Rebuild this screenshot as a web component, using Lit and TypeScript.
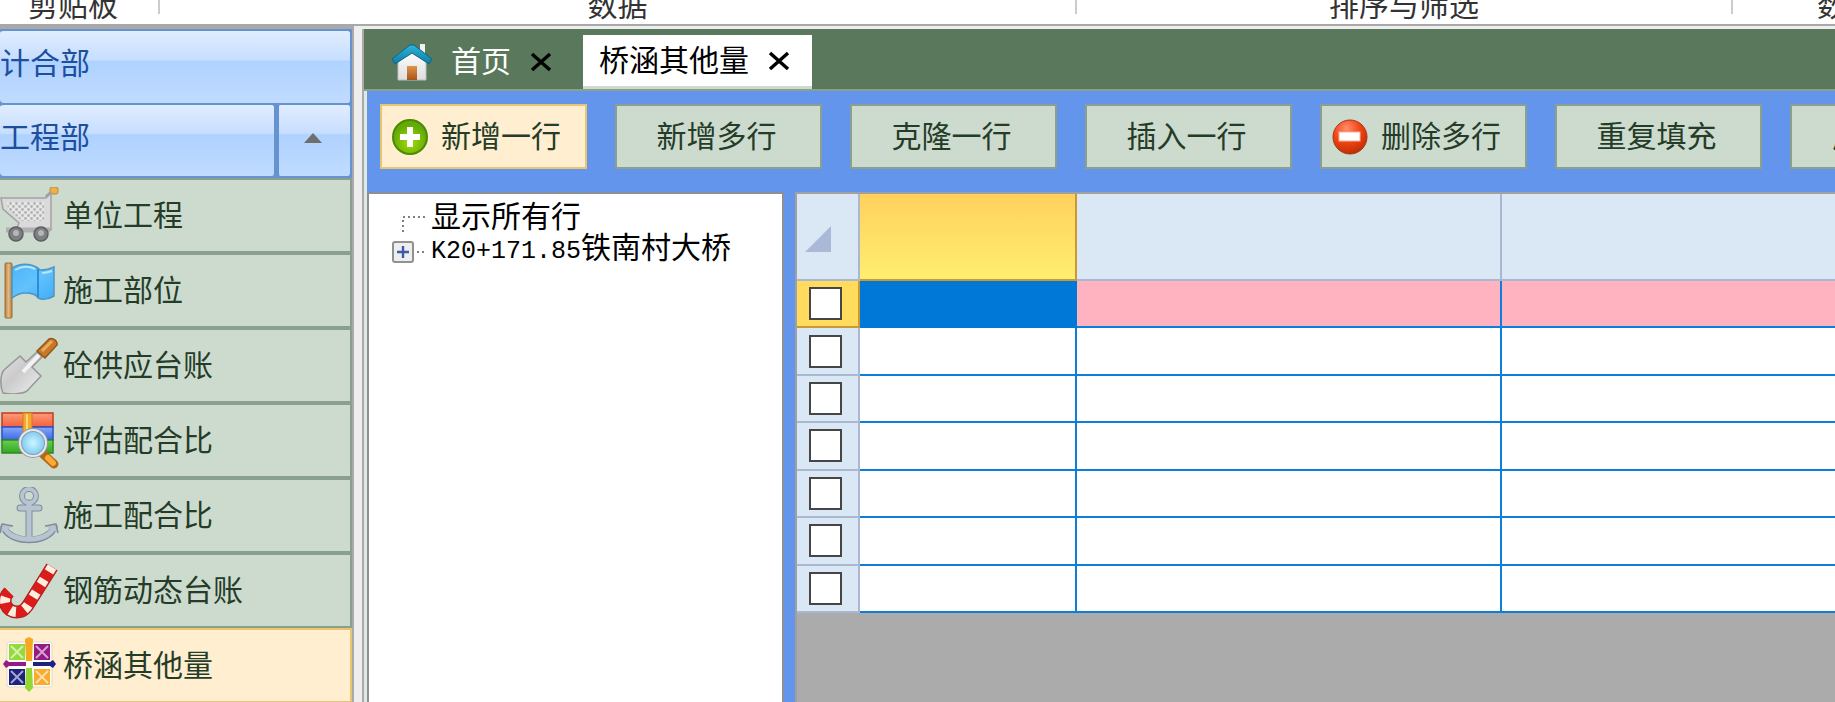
import { LitElement, html, css, svg } from "lit";
import { customElement, state } from "lit/decorators.js";

const cart = svg`
  <path d="M46 10 L53 4" stroke="#9a9a9a" stroke-width="3"/>
  <rect x="50" y="0" width="8" height="7" rx="2" fill="#efb04a" stroke="#b98a3a"/>
  <path d="M1 11 H46 L51 6 L51 43 H16 L19 36 L3 22 Z" fill="#dadada" stroke="#a2a2a2" stroke-width="1.5"/>
  <path d="M7 15 H44 V34 H22 L8 22 Z" fill="url(#mesh)"/>
  <path d="M6 43 H50" stroke="#b0b0b0" stroke-width="5"/>
  <circle cx="16" cy="47" r="7" fill="#7d7f82" stroke="#5c5f62" stroke-width="1.5"/><circle cx="16" cy="46" r="3" fill="#b4b6b8"/>
  <circle cx="41" cy="47" r="7" fill="#7d7f82" stroke="#5c5f62" stroke-width="1.5"/><circle cx="41" cy="46" r="3" fill="#b4b6b8"/>`;

const flag = svg`
  <rect x="5" y="1" width="7" height="55" rx="1" fill="url(#wood)" stroke="#9a6c34"/>
  <path d="M12 6 C20 1 30 1 38 6 L40 8 C45 8 50 7 54 5 L54 34 C49 37 43 38 38 36 C36 32 30 31 25 31 C20 31 16 33 12 36 Z" fill="url(#sky)" stroke="#4f95c2" stroke-width="1.5"/>
  <path d="M38 7 V35" stroke="#2b8ed6" stroke-width="2"/>
  <path d="M15 8 C22 4 29 4 35 7 M42 11 C46 11 49 10 52 9" stroke="#b8e6ff" stroke-width="2" fill="none"/>`;

const trowel = svg`
  <path d="M20 19 L26 25 L37 15 L42 20 L32 30 L41 39 L27 54 C20 58 8 57 3 56 C0 50 0 38 4 33 Z" fill="url(#steel)" stroke="#969696" stroke-width="1.5"/>
  <path d="M23 35 L39 18" stroke="#f3f3f3" stroke-width="4"/>
  <path d="M37 14 L49 2 C53 0 58 4 57 8 L45 21 Z" fill="#c9782a" stroke="#935618" stroke-width="1.5"/>
  <path d="M42 14 L52 4" stroke="#e8ab60" stroke-width="3"/>`;

const archive = svg`
  <rect x="2" y="1" width="51" height="14" fill="url(#tomato)" stroke="#c33a22" stroke-width="1.5"/>
  <rect x="2" y="15" width="51" height="13" fill="url(#azure)" stroke="#2b50c8" stroke-width="1.5"/>
  <rect x="2" y="28" width="51" height="13" fill="url(#leaf)" stroke="#2c8a20" stroke-width="1.5"/>
  <rect x="23" y="1" width="9" height="20" fill="#f5a82c" stroke="#c9821c"/>
  <path d="M27 2 V18" stroke="#ffd37a" stroke-width="2"/>
  <path d="M43 42 L54 52" stroke="#b36a15" stroke-width="9" stroke-linecap="round"/>
  <path d="M48 46 L53 51" stroke="#fba937" stroke-width="6" stroke-linecap="round"/>
  <circle cx="33" cy="31" r="13" fill="url(#lens)" stroke="#8f9aa8" stroke-width="4"/>
  <circle cx="33" cy="31" r="13" fill="none" stroke="#e4e9ee" stroke-width="2"/>`;

const anchor = svg`
  <g fill="none" stroke="#7f8c99" stroke-linecap="round">
    <circle cx="29" cy="9" r="7" stroke-width="6"/><path d="M29 16 V50 M20 21 H39" stroke-width="7"/>
    <path d="M4 40 C9 57 49 57 54 40" stroke-width="7"/></g>
  <path d="M0 46 L2 37 L13 39 M58 46 L56 37 L45 39" fill="#b4c1cf" stroke="#7f8c99" stroke-width="1.5"/>
  <g fill="none" stroke="#b7c4d2" stroke-linecap="round">
    <circle cx="29" cy="9" r="7" stroke-width="4"/><path d="M29 16 V50 M20 21 H39" stroke-width="5"/>
    <path d="M5 41 C10 56 48 56 53 41" stroke-width="5"/></g>`;

const cane = svg`
  <path d="M9 30 C1 38 6 50 17 50 C24 50 27 45 30 40 L52 5" fill="none" stroke="#a82020" stroke-width="13"/>
  <path d="M9 30 C1 38 6 50 17 50 C24 50 27 45 30 40 L52 5" fill="none" stroke="#dc1c1c" stroke-width="11"/>
  <path d="M9 30 C1 38 6 50 17 50 C24 50 27 45 30 40 L52 5" fill="none" stroke="#ffeede" stroke-width="10" stroke-dasharray="6 9" stroke-dashoffset="-6"/>`;

const tiles = svg`
  <rect x="7" y="5" width="45" height="45" rx="2" fill="#fffdf8" stroke="#e2dac8"/>
  <rect x="9" y="7" width="16" height="16" fill="#93da3a"/><rect x="34" y="7" width="16" height="16" fill="#951a86"/>
  <rect x="9" y="32" width="16" height="16" fill="#1c2280"/><rect x="34" y="32" width="16" height="16" fill="#f9ab2c"/>
  <path d="M11 9 L23 21 M23 9 L11 21 M36 9 L48 21 M48 9 L36 21 M11 34 L23 46 M23 34 L11 46 M36 34 L48 46 M48 34 L36 46" stroke="#fff" stroke-width="2" stroke-opacity=".6"/>
  <path d="M25 2 L29 0 L33 2 L32 24 H26 Z" fill="#f5a71e"/><path d="M26 31 H32 L33 51 L29 55 L25 51 Z" fill="#93d733"/>
  <path d="M3 27 L6 23 L9 25 H26 V29 H9 L6 31 Z" fill="#951a86"/><path d="M56 27 L53 23 L50 25 H33 V29 H50 L53 31 Z" fill="#1c2280"/>`;

const home = svg`
  <rect x="28" y="1" width="5" height="12" fill="#f1f1f1"/>
  <path d="M6 19 L20 7 L34 19 V37 H6 Z" fill="url(#wall)" stroke="#bdbdbd"/>
  <path d="M0 16 L18 2 H22 L40 16 L37 21 L20 10 L3 21 Z" fill="url(#roof)" stroke="#0c6688"/>
  <rect x="15" y="23" width="10" height="14" fill="url(#door)"/>`;

const plus = svg`
  <circle cx="18" cy="18" r="17" fill="url(#green)" stroke="#4b8a06" stroke-width="2"/>
  <path d="M18 8 V28 M8 18 H28" stroke="#fff" stroke-width="6"/>`;

const minus = svg`
  <circle cx="18" cy="18" r="17" fill="url(#red)" stroke="#a83416" stroke-width="1"/>
  <rect x="7" y="13" width="21" height="9" fill="#fff" stroke="#f6b09a"/>`;

const defs = svg`<defs>
  <pattern id="mesh" width="6" height="6" patternUnits="userSpaceOnUse"><rect width="6" height="6" fill="#e6e6e6"/><circle cx="1.5" cy="1.5" r="1.4" fill="#b4b4b4"/><circle cx="4.5" cy="4.5" r="1.4" fill="#b4b4b4"/></pattern>
  <linearGradient id="wood"><stop stop-color="#b98142"/><stop offset=".5" stop-color="#e3b983"/><stop offset="1" stop-color="#b98142"/></linearGradient>
  <linearGradient id="sky" x2="1" y2="1"><stop stop-color="#4db4f8"/><stop offset=".5" stop-color="#62c2fd"/><stop offset="1" stop-color="#41adf6"/></linearGradient>
  <linearGradient id="steel" x2="1" y2="1"><stop stop-color="#e4e4e4"/><stop offset=".45" stop-color="#cbcbcb"/><stop offset="1" stop-color="#efefef"/></linearGradient>
  <linearGradient id="tomato" x2="0" y2="1"><stop stop-color="#ff9a78"/><stop offset="1" stop-color="#f4603c"/></linearGradient>
  <linearGradient id="azure" x2="0" y2="1"><stop stop-color="#86a8fa"/><stop offset="1" stop-color="#3c68ea"/></linearGradient>
  <linearGradient id="leaf" x2="0" y2="1"><stop stop-color="#6cd050"/><stop offset="1" stop-color="#34a424"/></linearGradient>
  <radialGradient id="lens"><stop stop-color="#cdf6ff"/><stop offset="1" stop-color="#78c6f0"/></radialGradient>
  <linearGradient id="wall" x2="0" y2="1"><stop stop-color="#fff"/><stop offset="1" stop-color="#dedede"/></linearGradient>
  <linearGradient id="roof" x2="0" y2="1"><stop stop-color="#2cb4dc"/><stop offset="1" stop-color="#0f7da3"/></linearGradient>
  <linearGradient id="door" x2="0" y2="1"><stop stop-color="#e0954a"/><stop offset="1" stop-color="#a85316"/></linearGradient>
  <radialGradient id="green" cy=".65"><stop stop-color="#a4dc08"/><stop offset="1" stop-color="#64ab06"/></radialGradient>
  <radialGradient id="red" cx=".4" cy=".25" r=".8"><stop stop-color="#ff8d6c"/><stop offset=".5" stop-color="#f24412"/><stop offset="1" stop-color="#b82c02"/></radialGradient>
</defs>`;

const icon = (shape: unknown, w: number, h: number) =>
  html`<svg width=${w} height=${h} viewBox="0 0 ${w} ${h}" aria-hidden="true">${defs}${shape}</svg>`;

const MODULES = [
  { name: "单位工程", shape: cart },
  { name: "施工部位", shape: flag },
  { name: "砼供应台账", shape: trowel },
  { name: "评估配合比", shape: archive },
  { name: "施工配合比", shape: anchor },
  { name: "钢筋动态台账", shape: cane },
  { name: "桥涵其他量", shape: tiles },
];

const ACTIONS = [
  { name: "新增一行", shape: plus },
  { name: "新增多行" },
  { name: "克隆一行" },
  { name: "插入一行" },
  { name: "删除多行", shape: minus },
  { name: "重复填充" },
  { name: "反向选择" },
];

@customElement("app-root")
export class AppRoot extends LitElement {
  @state() private module = "桥涵其他量";
  @state() private action = "新增一行";

  static styles = css`
    :host {
      display: flex;
      flex-direction: column;
      height: 100vh;
      overflow: hidden;
      background: #eee;
      font: 30px/34px "Noto Sans CJK SC", sans-serif;
      color: #000;
    }
    * { box-sizing: border-box; }
    svg { display: block; flex: none; }
    button {
      font: inherit;
      color: inherit;
      margin: 0;
      padding: 0;
      border: 0;
      border-radius: 0;
      background: none;
      white-space: nowrap;
    }
    .ribbon {
      flex: none;
      display: grid;
      grid-template-columns: 160px 917fr 656fr 102fr;
      height: 26px;
      background: #fff;
      border-bottom: 2px solid #a9a9a9;
      color: #333;
      overflow: hidden;
    }
    .group {
      display: flex;
      align-items: flex-end;
      justify-content: center;
      height: 20px;
      min-width: 0;
      white-space: nowrap;
      padding-right: 2px;
    }
    .group:first-child { padding-right: 14px; }
    .group:last-child { justify-content: flex-start; padding-left: 84px; }
    .group:not(:last-child) {
      background: linear-gradient(#ccc, #ccc) right top / 2px 14px no-repeat;
    }
    .main { flex: 1; display: flex; min-height: 0; }
    .side {
      flex: none;
      width: 354px;
      border-top: 3px solid #a9a9a9;
      border-right: 2px solid #a9a9a9;
      background: #8b9f8f;
      overflow: hidden;
    }
    .head { display: flex; height: 74px; background: #6593cf; }
    .bar {
      flex: 1;
      text-align: left;
      color: #1d4f9e;
      padding-bottom: 12px;
      border: solid #6593cf;
      border-width: 2px 2px 0 0;
      border-radius: 4px;
      background: linear-gradient(#e1edff, #c6deff 40%, #afd2ff 42%, #c0dbff);
    }
    .head + .head { height: 75px; border-bottom: 2px solid #6593cf; }
    .fold {
      flex: none;
      width: 76px;
      display: flex;
      align-items: center;
      justify-content: center;
      padding: 0 4px 6px 0;
      border-left-width: 3px;
    }
    .item {
      display: flex;
      align-items: center;
      gap: 4px;
      width: 100%;
      height: 75px;
      border: solid #8b9f8f;
      border-width: 2px 2px 2px 0;
      background: #cddbce;
      color: #243c28;
    }
    .item span, .tool span { padding-bottom: 6px; }
    .item.on { border-color: #e9c56f; background: #ffeecf; }
    .work {
      flex: 1;
      min-width: 0;
      display: flex;
      flex-direction: column;
      margin: 3px 0 0 8px;
      border-left: 2px solid #a9a9a9;
    }
    .tabs {
      flex: none;
      display: flex;
      height: 62px;
      background: #5a785b;
      border-bottom: 2px solid #8ba18b;
      padding: 6px 0 0 28px;
    }
    .tab { display: flex; align-items: center; height: 54px; }
    .tab button { padding-bottom: 6px; }
    .tab.first { color: #fff; margin-right: 31px; }
    .tab.first button:first-child { display: flex; align-items: center; gap: 18px; }
    .tab.first svg { margin-top: 6px; }
    .tab.on { background: #fff; border-bottom: 3px solid #cddbce; padding: 0 22px 0 16px; }
    .tab .close { color: #000; width: 22px; margin-left: 19px; padding-bottom: 0; }
    .tab .close svg { margin-top: 0; }
    .page {
      flex: 1;
      min-height: 0;
      display: flex;
      flex-direction: column;
      background: #6495ed;
      border-left: 3px solid #dfe8e2;
    }
    .tools { flex: none; display: flex; gap: 28px; padding: 13px 0 23px 13px; overflow: hidden; }
    .tool {
      flex: none;
      width: 207px;
      height: 65px;
      display: flex;
      align-items: center;
      justify-content: center;
      gap: 13px;
      padding-right: 4px;
      border: 2px solid #8b9f8f;
      background: #cddbce;
      color: #243c28;
    }
    .tool.pic { justify-content: flex-start; padding-left: 10px; }
    .tool.on { border-color: #e9c56f; background: #ffeecf; }
    .panes { flex: 1; min-height: 0; display: flex; gap: 11px; }
    .tree {
      flex: none;
      width: 417px;
      margin: 0;
      padding: 4px 0 0 23px;
      list-style: none;
      background: #fff;
      border: 2px solid #8b8f96;
      border-bottom: 0;
    }
    .tree li { display: flex; align-items: center; height: 34px; white-space: nowrap; }
    .tree span { padding-bottom: 2px; }
    .tree svg { margin-right: 5px; }
    .num { font-family: "Liberation Mono", monospace; font-size: 25px; }
    .sheet {
      flex: 1;
      min-width: 0;
      background: #ababab;
      border: solid #a0a0a0;
      border-width: 2px 0 0 2px;
      overflow: hidden;
    }
    table { width: 100%; height: 419px; border-collapse: separate; border-spacing: 0; table-layout: fixed; }
    th, td { padding: 0; }
    thead tr { height: 87px; }
    th {
      background: #dae7f5;
      border: solid #a9b7d1;
      border-width: 0 2px 2px 0;
    }
    td { background: #fff; border: solid #0a7fdb; border-width: 0 2px 2px 0; }
    td:last-child, th:last-child { border-right: 0; }
    .c0 { width: 63px; }
    .c1 { width: 217px; }
    .c2 { width: 425px; }
    .corner svg { margin: 4px 0 0 8px; }
    .hot { background: linear-gradient(#ffd15c, #ffee70); border-color: #cc9834; }
    .cur th { background: #ffdb5e; border-color: #cc9834; }
    .cur td { background: #ffb3c0; }
    .cur .pick { background: #0078d7; border-color: #0078d7; }
    input {
      appearance: none;
      display: block;
      width: 33px;
      height: 33px;
      margin: 0 0 0 12px;
      border: 2px solid #464646;
      background: #fff;
    }
    input:checked { background: linear-gradient(#464646, #464646) center / 15px 15px no-repeat #fff; }
  `;

  private cross() {
    return html`<svg width="22" height="20" viewBox="0 0 22 20" aria-hidden="true"><path d="M2 2 L20 18 M20 2 L2 18" stroke="#000" stroke-width="3.4"/></svg>`;
  }

  render() {
    return html`
      <header class="ribbon">
        ${["剪贴板", "数据", "排序与筛选", "数据"].map((g) => html`<div class="group">${g}</div>`)}
      </header>
      <div class="main">
        <nav class="side">
          <div class="head"><button class="bar">计合部</button></div>
          <div class="head">
            <button class="bar">工程部</button>
            <button class="bar fold" aria-label="收起">
              <svg width="18" height="10" viewBox="0 0 18 10"><path d="M0 10 L9 0 L18 10 Z" fill="#6e6e6e"/></svg>
            </button>
          </div>
          ${MODULES.map((m) => html`
            <button class="item ${m.name === this.module ? "on" : ""}" @click=${() => (this.module = m.name)}>
              ${icon(m.shape, 59, 57)}<span>${m.name}</span>
            </button>`)}
        </nav>
        <main class="work">
          <div class="tabs">
            <div class="tab first">
              <button>${icon(home, 41, 38)}首页</button>
              <button class="close" aria-label="关闭首页">${this.cross()}</button>
            </div>
            <div class="tab on">
              <button>桥涵其他量</button>
              <button class="close" aria-label="关闭桥涵其他量">${this.cross()}</button>
            </div>
          </div>
          <div class="page">
            <div class="tools">
              ${ACTIONS.map((a) => html`
                <button class="tool ${a.shape ? "pic" : ""} ${a.name === this.action ? "on" : ""}" @click=${() => (this.action = a.name)}>
                  ${a.shape ? icon(a.shape, 36, 36) : null}<span>${a.name}</span>
                </button>`)}
            </div>
            <div class="panes">
              <ul class="tree">
                <li>
                  <svg width="34" height="34" viewBox="0 0 34 34"><path d="M11 34 V19 H34" fill="none" stroke="#808080" stroke-width="2" stroke-dasharray="2 3"/></svg>
                  <span>显示所有行</span>
                </li>
                <li>
                  <svg width="34" height="34" viewBox="0 0 34 34">
                    <path d="M25 20 H34" stroke="#808080" stroke-width="2" stroke-dasharray="2 3"/>
                    <rect x="1" y="10" width="20" height="20" rx="2" fill="#eee" stroke="#919191" stroke-width="2"/>
                    <path d="M11 14 V26 M5 20 H17" stroke="#3c5aa8" stroke-width="2.4"/>
                  </svg>
                  <span><span class="num">K20+171.85</span>铁南村大桥</span>
                </li>
              </ul>
              <div class="sheet">
                <table>
                  <colgroup><col class="c0"><col class="c1"><col class="c2"><col></colgroup>
                  <thead>
                    <tr>
                      <th class="corner"><svg width="26" height="26" viewBox="0 0 26 26"><path d="M0 26 L26 0 V26 Z" fill="#a9b9d7"/></svg></th>
                      <th class="hot"></th><th></th><th></th>
                    </tr>
                  </thead>
                  <tbody>
                    ${[1, 2, 3, 4, 5, 6, 7].map((n) => html`
                      <tr class=${n === 1 ? "cur" : ""}>
                        <th><input type="checkbox" aria-label="选择第${n}行"></th>
                        <td class="pick"></td><td></td><td></td>
                      </tr>`)}
                  </tbody>
                </table>
              </div>
            </div>
          </div>
        </main>
      </div>`;
  }
}
